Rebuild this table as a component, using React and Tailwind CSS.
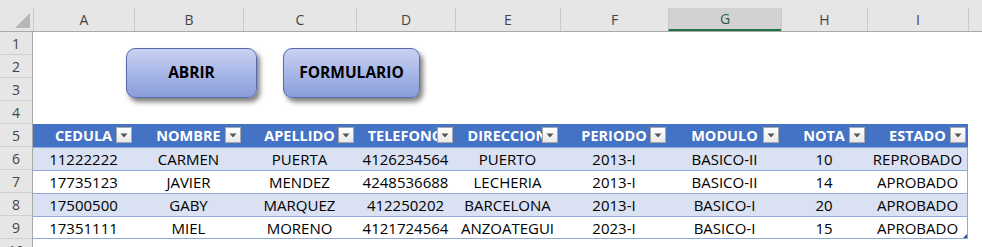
import React from 'react';

const columns = [
    { label: 'A', w: 'w-[101px]' },
    { label: 'B', w: 'w-[109px]' },
    { label: 'C', w: 'w-[113px]' },
    { label: 'D', w: 'w-[99px]' },
    { label: 'E', w: 'w-[105px]' },
    { label: 'F', w: 'w-[108px]' },
    { label: 'G', w: 'w-[113px]', active: true },
    { label: 'H', w: 'w-[86px]' },
    { label: 'I', w: 'w-[101px]' },
];

const headers = ['CEDULA', 'NOMBRE', 'APELLIDO', 'TELEFONO', 'DIRECCION', 'PERIODO', 'MODULO', 'NOTA', 'ESTADO'];

const rows = [
    ['11222222', 'CARMEN', 'PUERTA', '4126234564', 'PUERTO', '2013-I', 'BASICO-II', '10', 'REPROBADO'],
    ['17735123', 'JAVIER', 'MENDEZ', '4248536688', 'LECHERIA', '2013-I', 'BASICO-II', '14', 'APROBADO'],
    ['17500500', 'GABY', 'MARQUEZ', '412250202', 'BARCELONA', '2013-I', 'BASICO-I', '20', 'APROBADO'],
    ['17351111', 'MIEL', 'MORENO', '4121724564', 'ANZOATEGUI', '2023-I', 'BASICO-I', '15', 'APROBADO'],
];

const font = { fontFamily: '"Open Sans", sans-serif' };

function FilterButton() {
    return (
        <span className="absolute right-[2px] top-[3px] w-[16px] h-[16px] border border-[#a8a8a8] bg-gradient-to-b from-white to-[#e9e9e9] flex items-center justify-center">
            <svg width="8" height="5" viewBox="0 0 8 5">
                <path d="M0.5 0.5 H7.5 L4 4.5 Z" fill="#555" />
            </svg>
        </span>
    );
}

function SheetButton({ children, w }) {
    return (
        <button className={`${w} h-[50px] rounded-[9px] border border-[#566bae] bg-gradient-to-b from-[#c9d2f1] via-[#a8b7e8] to-[#8a9dd8] shadow-[3px_4px_5px_rgba(0,0,0,0.5)] text-[15.5px] font-bold text-black`} style={font}>
            {children}
        </button>
    );
}

export default function App() {
    return (
        <div className="w-[982px] h-[247px] overflow-hidden bg-white text-black" style={font}>
            {/* column letters */}
            <div className="h-[32px] flex bg-[#e6e6e6] border-b border-[#a9a9a9]">
                <div className="w-[33px] shrink-0 relative">
                    <div className="absolute left-[15px] top-[13px] w-0 h-0 border-l-[15px] border-l-transparent border-b-[15px] border-b-[#b7b7b7]" />
                </div>
                {columns.map((c) => (
                    <div
                        key={c.label}
                        className={`${c.w} shrink-0 mt-[8px] h-[23px] border-l border-[#c9c9c9] flex items-center justify-center text-[14px] ${c.active ? 'bg-[#d2d2d2] text-[#2d5e45] border-b-2 border-b-[#217346]' : 'text-[#444]'}`}
                    >
                        {c.label}
                    </div>
                ))}
                <div className="flex-1 mt-[8px] h-[23px] border-l border-[#c9c9c9]" />
            </div>

            <div className="flex">
                {/* row numbers */}
                <div className="w-[33px] shrink-0 bg-[#e6e6e6] border-r border-[#a9a9a9]">
                    {[1, 2, 3, 4, 5, 6, 7, 8, 9, 10].map((n) => (
                        <div key={n} className="h-[23px] border-b border-[#cfcfcf] flex items-center justify-center text-[14px] text-[#444]">
                            {n}
                        </div>
                    ))}
                </div>

                <div className="flex-1">
                    {/* rows 1-4 with the two shape buttons */}
                    <div className="h-[92px] pl-[93px] pt-[16px] flex items-start gap-[26px]">
                        <SheetButton w="w-[131px]">ABRIR</SheetButton>
                        <SheetButton w="w-[137px]">FORMULARIO</SheetButton>
                    </div>

                    {/* table */}
                    <div className="w-[935px] relative">
                        <div className="h-[23px] flex bg-[#4472c4]">
                            {headers.map((h, i) => (
                                <div key={h} className={`${columns[i].w} shrink-0 relative overflow-hidden flex items-center justify-center text-[14.5px] font-bold text-white whitespace-nowrap`}>
                                    {h}
                                    <FilterButton />
                                </div>
                            ))}
                        </div>
                        <div className="border-r border-[#8ea9db]">
                            {rows.map((r, ri) => (
                                <div key={ri} className={`h-[23px] flex border-t border-[#8ea9db] ${ri % 2 === 0 ? 'bg-[#d9e1f2]' : 'bg-white'} ${ri === rows.length - 1 ? 'border-b' : ''}`}>
                                    {r.map((v, ci) => (
                                        <div key={ci} className={`${columns[ci].w} shrink-0 flex items-center justify-center pt-[1px] text-[15px] whitespace-nowrap`}>
                                            {v}
                                        </div>
                                    ))}
                                </div>
                            ))}
                        </div>
                        <div className="absolute right-[1px] bottom-[1px] w-0 h-0 border-l-[4px] border-l-transparent border-b-[4px] border-b-[#2f5597]" />
                    </div>
                </div>
            </div>
        </div>
    );
}
